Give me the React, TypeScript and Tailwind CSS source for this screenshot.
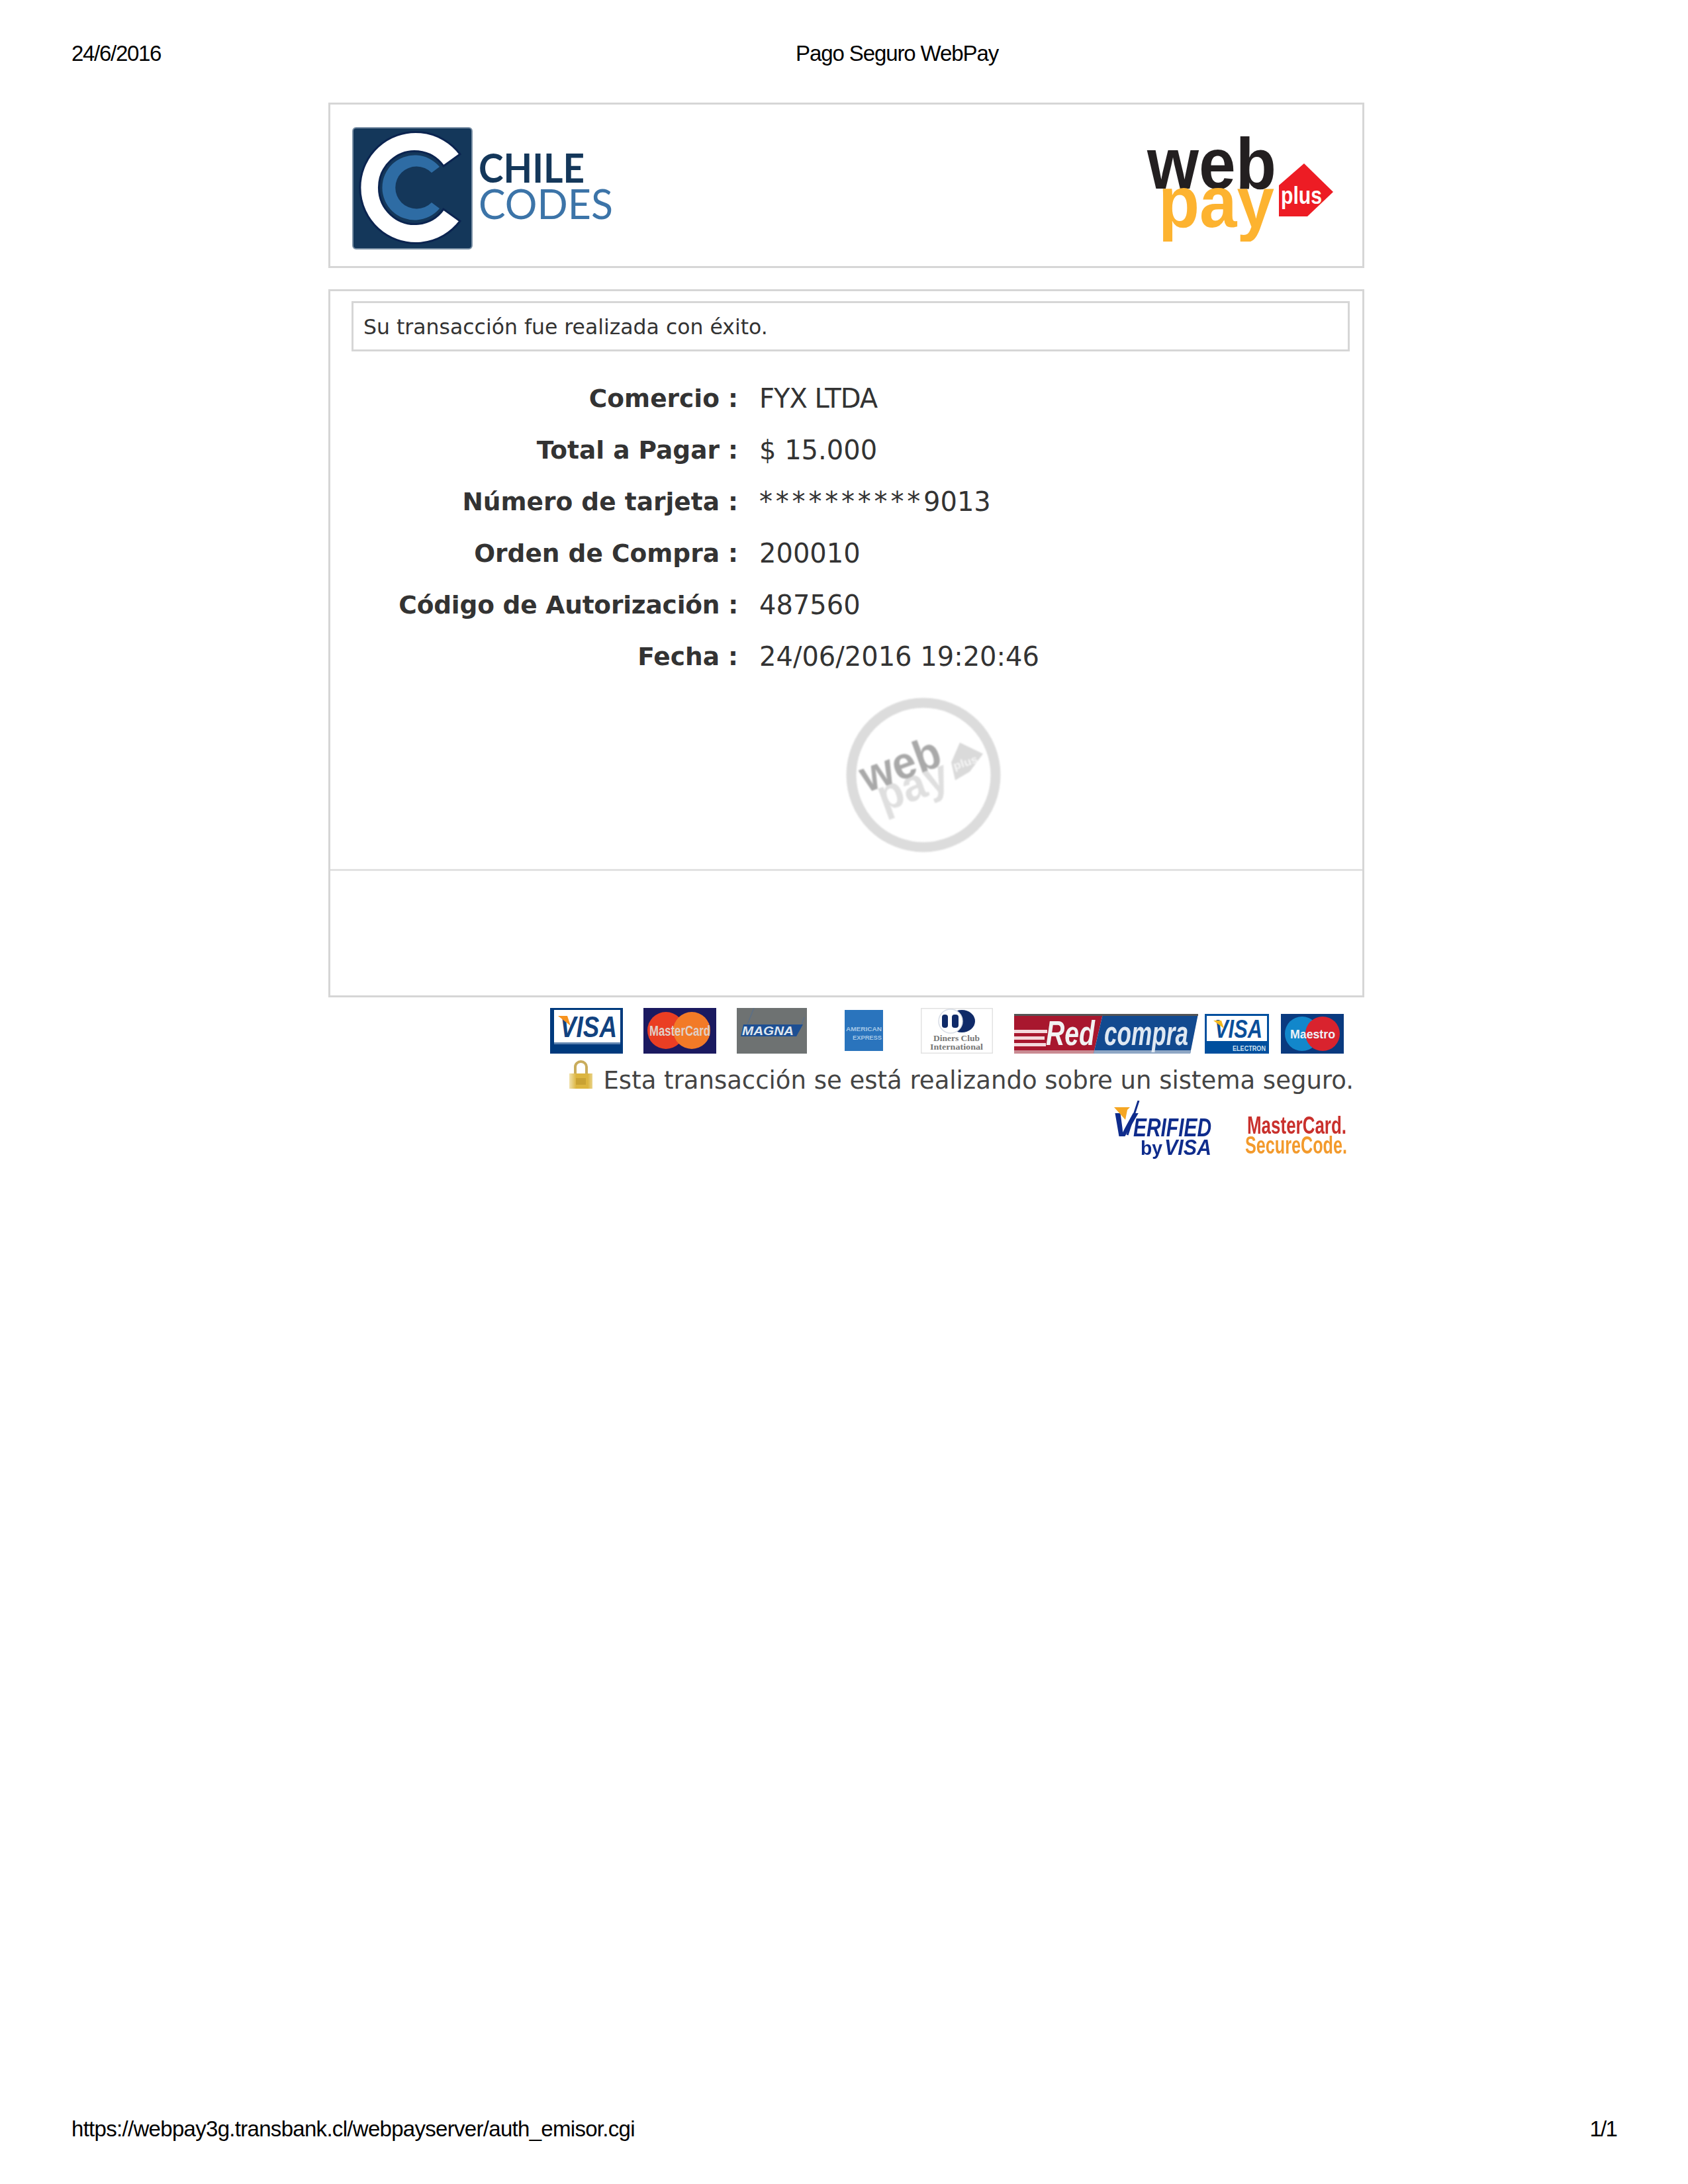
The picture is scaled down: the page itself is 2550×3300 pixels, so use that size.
const rows: [string, React.ReactNode, string][] = [
  ["Comercio :", <span className="tracking-[-1px]">FYX LTDA</span>, ""],
  ["Total a Pagar :", "$ 15.000", ""],
  ["Número de tarjeta :", <><span className="tracking-[4.8px]">**********</span>9013</>, ""],
  ["Orden de Compra :", "200010", ""],
  ["Código de Autorización :", "487560", "tracking-[-0.2px]"],
  ["Fecha :", "24/06/2016 19:20:46", ""],
];

const sans = "'Liberation Sans', sans-serif";
const serif = "'Liberation Serif', serif";
const lato = "Lato, sans-serif";

function ChileCodesLogo() {
  return (
    <svg width="396" height="186" viewBox="0 0 396 186" className="mt-[9px]">
      <rect x="1" y="1" width="180" height="183" rx="5" fill="#14375a" stroke="#7e93a8" strokeWidth="2" />
      <path d="M163 41 A84 84 0 1 0 163 142 L138 124 A54 55 0 1 1 138 59 Z" fill="#fff" stroke="#0b2450" strokeWidth="3" />
      <path d="M132 60 A49 49 0 1 0 132 123 L120 114 A32 32 0 1 1 120 69 Z" fill="#2e6ca4" />
      <text x="191" y="84" fontFamily={lato} fontWeight="700" fontSize="62" fill="#14375a" textLength="160" lengthAdjust="spacingAndGlyphs">CHILE</text>
      <text x="191" y="139" fontFamily={lato} fontWeight="400" fontSize="62" fill="#3c74a8" textLength="203" lengthAdjust="spacingAndGlyphs">CODES</text>
    </svg>
  );
}

function WebpayLogo() {
  return (
    <svg width="286" height="165" viewBox="0 0 286 165" className="mt-[5px]">
      <text x="4" y="85" fontFamily={sans} fontWeight="700" fontSize="110" fill="#231f20" textLength="195" lengthAdjust="spacingAndGlyphs">web</text>
      <text x="21" y="143" fontFamily={sans} fontWeight="700" fontSize="110" fill="#fdb330" textLength="175" lengthAdjust="spacingAndGlyphs">pay</text>
      <path d="M241 47 L285 90 L246 127 L203 127 L203 80 Z" fill="#ed1c24" />
      <text x="206" y="108" fontFamily={sans} fontWeight="700" fontSize="36" fill="#fff" textLength="62" lengthAdjust="spacingAndGlyphs">plus</text>
    </svg>
  );
}

function Seal() {
  return (
    <svg width="240" height="240" viewBox="0 0 240 240" className="blur-[1px]">
      <circle cx="120" cy="120" r="109" fill="none" stroke="#dcdcdc" strokeWidth="15" />
      <g transform="translate(34 147) rotate(-20)">
        <text x="14" y="36" fontFamily={sans} fontWeight="700" fontSize="68" fill="#dfdfdf" textLength="110" lengthAdjust="spacingAndGlyphs">pay</text>
        <text x="0" y="0" fontFamily={sans} fontWeight="700" fontSize="68" fill="#a9a9a9" textLength="125" lengthAdjust="spacingAndGlyphs">web</text>
      </g>
      <path d="M175 71 L210 88 L190 115 L168 128 L162 101 Z" fill="#dadada" />
      <text x="164" y="108" transform="rotate(-18 180 100)" fontFamily={sans} fontWeight="700" fontSize="17" fill="#f5f5f5" textLength="38" lengthAdjust="spacingAndGlyphs">plus</text>
    </svg>
  );
}

function Cards() {
  return (
    <div className="flex items-end blur-[0.5px]">
      <svg width="110" height="69" viewBox="0 0 110 69">
        <rect width="110" height="69" fill="#003a7d" />
        <rect x="6" y="3" width="100" height="52" fill="#fff" />
        <rect x="6" y="52" width="100" height="3" fill="#5f84b0" />
        <text x="15" y="44" fontFamily={sans} fontStyle="italic" fontWeight="700" fontSize="44" fill="#11427f" textLength="86" lengthAdjust="spacingAndGlyphs">VISA</text>
        <path d="M12 12 L26 12 L31 27 Z" fill="#f7931e" />
      </svg>
      <svg width="110" height="69" viewBox="0 0 110 69" className="ml-[31px]">
        <rect width="110" height="69" fill="#1b1a60" />
        <circle cx="34" cy="34" r="28" fill="#ea3e23" />
        <circle cx="73" cy="34" r="28" fill="#f27a27" />
        <text x="9" y="42" fontFamily={sans} fontWeight="700" fontSize="22" fill="#e0d0c8" textLength="92" lengthAdjust="spacingAndGlyphs">MasterCard</text>
      </svg>
      <svg width="106" height="69" viewBox="0 0 106 69" className="ml-[31px]">
        <rect width="106" height="69" fill="#6e7272" />
        <path d="M26 0 L16 25 M102 14 L98 25" stroke="#5b6f87" strokeWidth="1.5" />
        <path d="M10 25 L100 25 L90 43 L6 43 Z" fill="#1d4f93" />
        <text x="8" y="41" fontFamily={sans} fontStyle="italic" fontWeight="700" fontSize="19" fill="#dfe6ee" textLength="78" lengthAdjust="spacingAndGlyphs">MAGNA</text>
      </svg>
      <svg width="58" height="62" viewBox="0 0 58 62" className="ml-[57px] mb-[4px]">
        <rect width="58" height="62" fill="#2a74bd" />
        <text x="2" y="32" fontFamily={sans} fontWeight="700" fontSize="9" fill="#a6c8e6" textLength="54" lengthAdjust="spacingAndGlyphs">AMERICAN</text>
        <text x="12" y="45" fontFamily={sans} fontWeight="700" fontSize="9" fill="#a6c8e6" textLength="44" lengthAdjust="spacingAndGlyphs">EXPRESS</text>
      </svg>
      <svg width="109" height="69" viewBox="0 0 109 69" className="ml-[57px]">
        <rect x="0.5" y="0.5" width="108" height="68" fill="#fff" stroke="#e2e2e2" strokeWidth="2" />
        <ellipse cx="62" cy="20" rx="20" ry="17" fill="#0f2a68" />
        <circle cx="45" cy="20" r="18" fill="#fff" stroke="#d8dde6" strokeWidth="1.5" />
        <rect x="32" y="10" width="9" height="20" rx="4" fill="#0f2a68" />
        <rect x="47" y="10" width="10" height="20" rx="4" fill="#0f2a68" />
        <text x="19" y="50" fontFamily={serif} fontWeight="700" fontSize="13" fill="#777" textLength="70" lengthAdjust="spacingAndGlyphs">Diners Club</text>
        <text x="14" y="63" fontFamily={serif} fontWeight="700" fontSize="12" fill="#777" textLength="80" lengthAdjust="spacingAndGlyphs">International</text>
      </svg>
      <svg width="278" height="60" viewBox="0 0 278 60" className="ml-[32px]">
        <path d="M0 0 H134 L120 60 H0 Z" fill="#a8172e" />
        <path d="M134 0 H278 L266 60 H120 Z" fill="#124a90" />
        <rect width="134" height="3" fill="#555" />
        <rect x="134" width="144" height="3" fill="#555" />
        <path d="M0 55 H121 L120 60 H0 Z" fill="#c98a92" />
        <path d="M121 55 H267 L266 60 H120 Z" fill="#8ea6c4" />
        <rect y="24" width="50" height="5" fill="#f4d8dc" />
        <rect y="34" width="46" height="5" fill="#f4d8dc" />
        <rect y="44" width="48" height="5" fill="#f4d8dc" />
        <text x="48" y="47" fontFamily={sans} fontStyle="italic" fontWeight="700" fontSize="52" fill="#f2f2f2" textLength="74" lengthAdjust="spacingAndGlyphs">Red</text>
        <text x="136" y="47" fontFamily={sans} fontStyle="italic" fontWeight="700" fontSize="52" fill="#dfe8f2" textLength="127" lengthAdjust="spacingAndGlyphs">compra</text>
      </svg>
      <svg width="97" height="60" viewBox="0 0 97 60" className="ml-[10px]">
        <rect width="97" height="60" fill="#004f9e" />
        <rect x="3" y="3" width="91" height="38" fill="#fff" />
        <text x="15" y="36" fontFamily={sans} fontStyle="italic" fontWeight="700" fontSize="38" fill="#0a4f9a" textLength="72" lengthAdjust="spacingAndGlyphs">VISA</text>
        <path d="M13 10 L25 10 L29 22 Z" fill="#f4b81c" />
        <text x="42" y="56" fontFamily={sans} fontWeight="700" fontSize="10" fill="#cfe0f0" textLength="50" lengthAdjust="spacingAndGlyphs">ELECTRON</text>
      </svg>
      <svg width="95" height="60" viewBox="0 0 95 60" className="ml-[18px]">
        <rect width="95" height="60" fill="#0a3a7f" />
        <circle cx="32" cy="30" r="26" fill="#1287cb" />
        <circle cx="63" cy="30" r="26" fill="#d9232e" />
        <text x="14" y="37" fontFamily={sans} fontWeight="700" fontSize="19" fill="#eef2f7" textLength="68" lengthAdjust="spacingAndGlyphs">Maestro</text>
      </svg>
    </div>
  );
}

function Lock() {
  return (
    <svg width="35" height="43" viewBox="0 0 35 43" className="mb-[11px] blur-[0.4px]">
      <defs>
        <linearGradient id="lockBody" x1="0" x2="1" y1="0" y2="0">
          <stop offset="0" stopColor="#f1e2ae" />
          <stop offset="0.3" stopColor="#dcb53f" />
          <stop offset="0.8" stopColor="#dcb53f" />
          <stop offset="1" stopColor="#e9d48d" />
        </linearGradient>
      </defs>
      <path d="M9 22 V10 A8.5 8 0 0 1 26 10 V22" fill="none" stroke="#c9ac5c" strokeWidth="4" />
      <rect x="0" y="20" width="35" height="23" fill="url(#lockBody)" />
      <rect x="10" y="27" width="15" height="10" fill="#c9a233" />
    </svg>
  );
}

function VerifiedByVisa() {
  return (
    <svg width="152" height="88" viewBox="0 0 152 88" className="blur-[0.4px]">
      <text x="1" y="54" fontFamily={sans} fontStyle="italic" fontWeight="700" fontSize="50" fill="#0f2c8c" textLength="36" lengthAdjust="spacingAndGlyphs">V</text>
      <text x="33" y="54" fontFamily={sans} fontStyle="italic" fontWeight="700" fontSize="38" fill="#0f2c8c" textLength="118" lengthAdjust="spacingAndGlyphs">ERIFIED</text>
      <path d="M4 10 L28 10 L24 14 L21 29 Z" fill="#f5a623" />
      <path d="M24 52 L41 0" stroke="#0f2c8c" strokeWidth="3" fill="none" />
      <text x="44" y="82" fontFamily={sans} fontWeight="700" fontSize="30" fill="#0f2c8c" textLength="33" lengthAdjust="spacingAndGlyphs">by</text>
      <text x="80" y="82" fontFamily={sans} fontStyle="italic" fontWeight="700" fontSize="34" fill="#0f2c8c" textLength="71" lengthAdjust="spacingAndGlyphs">VISA</text>
    </svg>
  );
}

function SecureCode() {
  return (
    <svg width="156" height="62" viewBox="0 0 156 62" className="blur-[0.4px]">
      <text x="3" y="28" fontFamily={sans} fontWeight="700" fontSize="36" fill="#c9302c" textLength="150" lengthAdjust="spacingAndGlyphs">MasterCard.</text>
      <text x="0" y="58" fontFamily={sans} fontWeight="700" fontSize="37" fill="#f39a2c" textLength="154" lengthAdjust="spacingAndGlyphs">SecureCode.</text>
    </svg>
  );
}

export default function App() {
  return (
    <div className="flex h-[3300px] flex-col justify-between bg-white font-['DejaVu_Sans',sans-serif] text-[#333]">
      <div>
        <header className="flex px-[108px] pt-[62px] font-['Liberation_Sans',sans-serif] text-[33px] leading-[38px] text-black">
          <span className="w-[1094px] tracking-[-1.3px]">24/6/2016</span>
          <span className="tracking-[-1.1px]">Pago Seguro WebPay</span>
        </header>

        <main className="ml-[496px] mt-[55px] w-[1565px]">
          <section className="flex h-[250px] items-center justify-between border-[3px] border-[#d6d6d6] pl-[33px] pr-[43px]">
            <ChileCodesLogo />
            <WebpayLogo />
          </section>

          <section className="mt-[32px] h-[1070px] border-[3px] border-[#d6d6d6]">
            <div className="h-[876px] border-b-[3px] border-[#e2e2e2] pl-[32px] pr-[19px] pt-[15px]">
              <div className="flex h-[76px] items-center border-[3px] border-[#d6d6d6] pl-[15px] pt-[4px] text-[31.5px]">
                Su transacción fue realizada con éxito.
              </div>
              <dl className="mt-[43px] flex flex-col gap-[22px] leading-[56px]">
                {rows.map(([label, value, labelClass]) => (
                  <div key={label} className="flex">
                    <dt className={`w-[584px] whitespace-nowrap text-right text-[37.5px] font-bold ${labelClass}`}>{label}</dt>
                    <dd className="ml-[32px] text-[40px]">{value}</dd>
                  </div>
                ))}
              </dl>
              <div className="ml-[744px] mt-[31px]">
                <Seal />
              </div>
            </div>
          </section>

          <div className="ml-[335px] mt-[16px]">
            <Cards />
          </div>

          <div className="mt-[10px] flex w-[1549px] items-end justify-end text-[#444]">
            <Lock />
            <span className="ml-[16px] text-[37px] leading-[46px]">Esta transacción se está realizando sobre un sistema seguro.</span>
          </div>

          <div className="mt-[7px] flex w-[1541px] items-end justify-end">
            <VerifiedByVisa />
            <div className="mb-[4px] ml-[50px]">
              <SecureCode />
            </div>
          </div>
        </main>
      </div>

      <footer className="flex justify-between px-[108px] pb-[64px] font-['Liberation_Sans',sans-serif] text-[33px] leading-[38px] text-black">
        <span className="tracking-[-0.7px]">https://webpay3g.transbank.cl/webpayserver/auth_emisor.cgi</span>
        <span className="tracking-[-1.8px]">1/1</span>
      </footer>
    </div>
  );
}
